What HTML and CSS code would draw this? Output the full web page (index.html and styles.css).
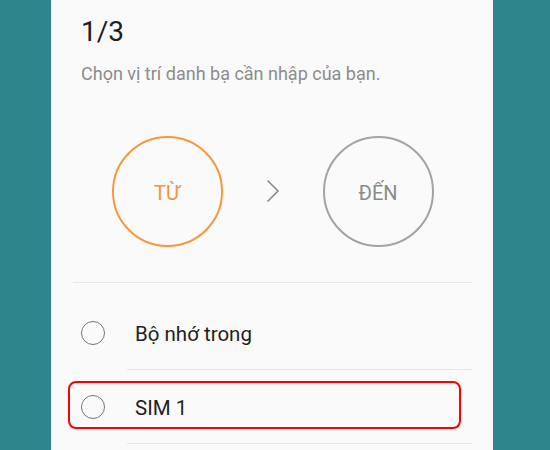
FILE: index.html
```html
<!DOCTYPE html>
<html lang="vi">
<head>
<meta charset="utf-8">
<link rel="stylesheet" href="styles.css">
</head>
<body>
<div class="page">
  <div class="panel">
    <h1 class="step">1/3</h1>
    <p class="hint">Chọn vị trí danh bạ cần nhập của bạn.</p>
    <div class="flow">
      <div class="node node-from">TỪ</div>
      <svg class="chevron" width="14" height="24" viewBox="0 0 14 24"><path d="M1.5 1.5 L12 12 L1.5 22.5" fill="none" stroke="#8a8a8a" stroke-width="1.6"/></svg>
      <div class="node node-to">ĐẾN</div>
    </div>
    <div class="divider"></div>
    <ul class="options">
      <li class="option"><span class="radio"></span><span class="label">Bộ nhớ trong</span></li>
      <li class="option"><span class="radio"></span><span class="label">SIM 1</span><span class="highlight"></span></li>
    </ul>
  </div>
</div>
</body>
</html>
```

FILE: styles.css
```css
html, body {
  margin: 0;
  padding: 0;
}
body {
  font-family: Roboto, "Noto Sans", sans-serif;
  background: #2e858c;
}
.page {
  display: flex;
  height: 450px;
  overflow: hidden;
}
.panel {
  margin-left: 51px;
  width: 442px;
  box-sizing: border-box;
  padding: 0 21px 0 22px;
  background: #fafafa;
  display: flex;
  flex-direction: column;
}
.step {
  margin: 16px 0 0 8px;
  font-size: 28px;
  line-height: 32px;
  font-weight: 400;
  color: #1e1e1e;
}
.hint {
  margin: 15px 0 0 8px;
  font-size: 18px;
  line-height: 22px;
  color: #8c8c8c;
}
.flow {
  margin-top: 51px;
  display: flex;
  align-items: center;
  justify-content: center;
  gap: 43px;
}
.node {
  width: 111px;
  height: 111px;
  box-sizing: border-box;
  border-radius: 50%;
  border: 2px solid;
  display: flex;
  align-items: center;
  justify-content: center;
  font-size: 20px;
  padding-top: 2px;
}
.node-from {
  border-color: #f7983c;
  color: #f7943a;
}
.node-to {
  border-color: #a3a3a3;
  color: #8a8a8a;
}
.chevron {
  display: block;
  margin-top: -2px;
}
.divider {
  margin-top: 35px;
  height: 1px;
  background: #e8e8e8;
}
.options {
  list-style: none;
  margin: 13px 0 0;
  padding: 0;
}
.option {
  position: relative;
  height: 73px;
  display: flex;
  align-items: center;
  padding-left: 8px;
}
.option::after {
  content: "";
  position: absolute;
  left: 54px;
  right: 0;
  bottom: -1px;
  height: 1px;
  background: #e6e6e6;
}
.option + .option {
  margin-top: 1px;
}
.radio {
  width: 24px;
  height: 24px;
  box-sizing: border-box;
  border: 1.7px solid #757575;
  border-radius: 50%;
  flex: none;
}
.label {
  margin-left: 30px;
  font-size: 20.5px;
  color: #1e1e1e;
  padding-top: 2px;
}
.highlight {
  position: absolute;
  left: -5px;
  width: 393px;
  top: 11px;
  height: 48px;
  box-sizing: border-box;
  border: 2px solid #ff0000;
  border-radius: 8px;
}
```
